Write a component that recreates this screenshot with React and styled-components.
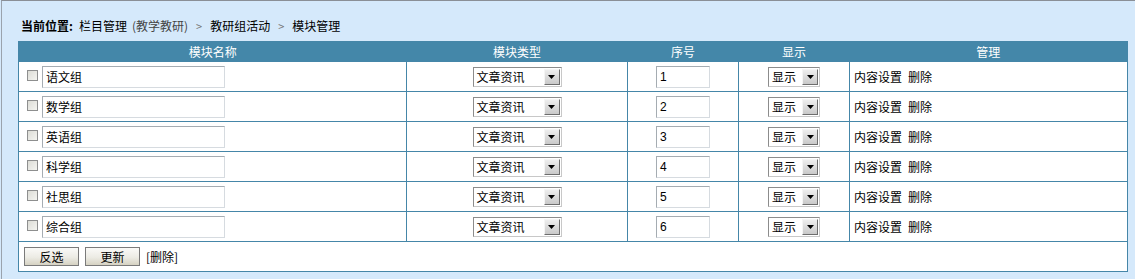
import React from "react";
import styled, { createGlobalStyle } from "styled-components";

const GlobalStyle = createGlobalStyle`
  html, body {
    margin: 0;
    padding: 0;
    background: #d5e9fb;
  }
  body {
    font-family: "Noto Sans CJK SC", "DejaVu Sans", sans-serif;
    font-size: 12px;
    color: #000;
  }
`;

const modules = [
  { name: "语文组", order: 1 },
  { name: "数学组", order: 2 },
  { name: "英语组", order: 3 },
  { name: "科学组", order: 4 },
  { name: "社思组", order: 5 },
  { name: "综合组", order: 6 },
];

export default function App() {
  return (
    <Page>
      <GlobalStyle />
      <Crumbs>
        <b>当前位置:</b>
        <span>栏目管理</span>
        <Muted>(教学教研)</Muted>
        <Sep>&gt;</Sep>
        <span>教研组活动</span>
        <Sep>&gt;</Sep>
        <span>模块管理</span>
      </Crumbs>
      <Grid>
        <colgroup>
          <col style={{ width: 388 }} />
          <col style={{ width: 221 }} />
          <col style={{ width: 111 }} />
          <col style={{ width: 111 }} />
          <col />
        </colgroup>
        <thead>
          <tr>
            <Th>模块名称</Th>
            <Th>模块类型</Th>
            <Th>序号</Th>
            <Th>显示</Th>
            <Th>管理</Th>
          </tr>
        </thead>
        <tbody>
          {modules.map((m) => (
            <Row key={m.order}>
              <Cell>
                <NameBox>
                  <Check />
                  <TextBox>{m.name}</TextBox>
                </NameBox>
              </Cell>
              <Cell $center>
                <Select $width={89}>
                  <span>文章资讯</span>
                  <Arrow />
                </Select>
              </Cell>
              <Cell $center>
                <NumBox>{m.order}</NumBox>
              </Cell>
              <Cell $center>
                <Select $width={52}>
                  <span>显示</span>
                  <Arrow />
                </Select>
              </Cell>
              <Cell>
                <Links>
                  <a>内容设置</a>
                  <a>删除</a>
                </Links>
              </Cell>
            </Row>
          ))}
          <Row>
            <FootCell colSpan={5}>
              <Actions>
                <Button>反选</Button>
                <Button>更新</Button>
                <span>[删除]</span>
              </Actions>
            </FootCell>
          </Row>
        </tbody>
      </Grid>
    </Page>
  );
}

function Arrow() {
  return (
    <ArrowBtn>
      <svg width="7" height="4" viewBox="0 0 7 4">
        <path d="M0 0h7L3.5 4z" fill="#000" />
      </svg>
    </ArrowBtn>
  );
}

const Page = styled.div`
  height: 279px;
  box-sizing: border-box;
  border-top: 1px solid #8a8f96;
  border-left: 1px solid #9aa3ad;
  margin-left: 1px;
  padding: 0 7px 0 16px;
`;

const Crumbs = styled.div`
  height: 40px;
  box-sizing: border-box;
  padding: 17px 0 0 3px;
  line-height: 16px;
  display: flex;
  gap: 5px;
  b {
    font-weight: 700;
    margin-right: 1px;
  }
`;

const Muted = styled.span`
  color: #444;
`;

const Sep = styled.span`
  color: #777;
  margin: 0 3px;
  font-size: 11px;
`;

const Grid = styled.table`
  width: 1110px;
  border-collapse: collapse;
  table-layout: fixed;
  background: #fff;
  border: 1px solid #4586a8;
`;

const Th = styled.th`
  height: 19px;
  padding: 0;
  background: #4487a9;
  color: #fff;
  font-weight: 400;
  font-size: 12px;
  line-height: 19px;
  text-align: center;
`;

const Row = styled.tr`
  height: 30px;
`;

const Cell = styled.td`
  padding: 0;
  border: 1px solid #4586a8;
  text-align: ${(p) => (p.$center ? "center" : "left")};
  vertical-align: middle;
`;

const FootCell = styled(Cell)`
  padding-left: 5px;
`;

const NameBox = styled.div`
  display: flex;
  align-items: center;
  gap: 4px;
  padding-left: 8px;
`;

const Check = styled.span`
  width: 11px;
  height: 11px;
  box-sizing: border-box;
  border: 1px solid #8e8f8f;
  background: linear-gradient(135deg, #dcdcd6 0%, #f4f4f0 100%);
  margin-top: -3px;
`;

const TextBox = styled.div`
  width: 183px;
  height: 22px;
  box-sizing: border-box;
  border: 1px solid;
  border-color: #a5acb2 #d6dbe0 #d6dbe0 #a5acb2;
  padding: 0 3px;
  line-height: 20px;
  font-size: 12px;
`;

const NumBox = styled(TextBox)`
  width: 54px;
  margin: 0 auto;
  text-align: left;
  font-family: "Liberation Sans", Arial, sans-serif;
`;

const Select = styled.div`
  display: inline-flex;
  align-items: center;
  justify-content: space-between;
  width: ${(p) => p.$width}px;
  height: 20px;
  box-sizing: border-box;
  border: 1px solid;
  border-color: #8c8c8c #c8c8c8 #c8c8c8 #8c8c8c;
  padding: 0 1px 0 3px;
  background: #fff;
  line-height: 18px;
  vertical-align: middle;
  text-align: left;
`;

const ArrowBtn = styled.span`
  width: 16px;
  height: 16px;
  box-sizing: border-box;
  display: flex;
  align-items: center;
  justify-content: center;
  border: 1px solid;
  border-color: #f5f5f5 #6d6d6d #6d6d6d #f5f5f5;
  background: linear-gradient(180deg, #eeeeee, #c9c9c9);
`;

const Links = styled.div`
  padding-left: 4px;
  display: flex;
  gap: 6px;
  a {
    color: #000;
    cursor: pointer;
  }
`;

const Actions = styled.div`
  display: flex;
  align-items: center;
  gap: 6px;
  span {
    color: #000;
  }
`;

const Button = styled.button`
  width: 55px;
  height: 19px;
  padding: 0;
  border: 1px solid #7a7a7a;
  background: linear-gradient(180deg, #fafaf8 0%, #ecebe4 55%, #d6d2c2 100%);
  font-family: "Noto Sans CJK SC", sans-serif;
  font-size: 12px;
  line-height: 17px;
  color: #000;
`;
